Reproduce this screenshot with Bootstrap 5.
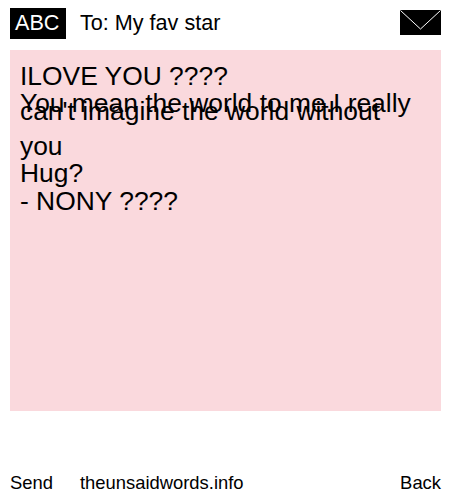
<!DOCTYPE html>
<html lang="en">
<head>
<meta charset="utf-8">
<title>To: My fav star</title>
<link href="https://cdn.jsdelivr.net/npm/bootstrap@5.3.0/dist/css/bootstrap.min.css" rel="stylesheet">
<style>
html, body { height: 500px; overflow: hidden; }
body { font-family: "Liberation Sans", Arial, sans-serif; color: #000; background: #fff; }
.sheet { width: 431px; height: 500px; margin-left: 10px; }
.top-bar { height: 50px; padding-top: 8px; }
.logo-box { width: 56px; height: 31px; padding-left: 5px; background: #000; color: #fff; font-size: 21.6px; line-height: 30px; }
.to-line { font-size: 21.6px; line-height: 30px; margin-left: 14px; }
.env { margin-top: 2px; display: block; }
.note { height: 361px; background: #fad9dd; padding: 12px 10px 0; font-size: 26.4px; line-height: 28px; }
.note div { white-space: nowrap; }
.note .second-line { margin-top: -1px; }
.note .overlap { margin-top: -20px; }
.note .after-overlap { margin-top: 7px; }
.note .after-overlap + div { margin-top: -1px; }
.foot { margin-top: 58px; font-size: 18.4px; line-height: 28px; }
.foot-site { margin-left: 27px; }
</style>
</head>
<body>
<div class="sheet d-flex flex-column">
  <div class="top-bar d-flex align-items-start">
    <div class="logo-box">ABC</div>
    <div class="to-line flex-grow-1">To: My fav star</div>
    <svg class="env" width="41" height="25" viewBox="0 0 41 25" role="img" aria-label="Mail">
      <rect width="41" height="25" fill="#000"/>
      <path d="M0.5 0.5 L20.5 19 L40.5 0.5" fill="none" stroke="#fff" stroke-width="1"/>
    </svg>
  </div>
  <div class="note">
    <div>ILOVE YOU ????</div>
    <div class="second-line">You mean the world to me.I really</div>
    <div class="overlap">can't imagine the world without</div>
    <div class="after-overlap">you</div>
    <div>Hug?</div>
    <div>- NONY ????</div>
  </div>
  <div class="foot d-flex">
    <span>Send</span>
    <span class="foot-site flex-grow-1">theunsaidwords.info</span>
    <span>Back</span>
  </div>
</div>
</body>
</html>
